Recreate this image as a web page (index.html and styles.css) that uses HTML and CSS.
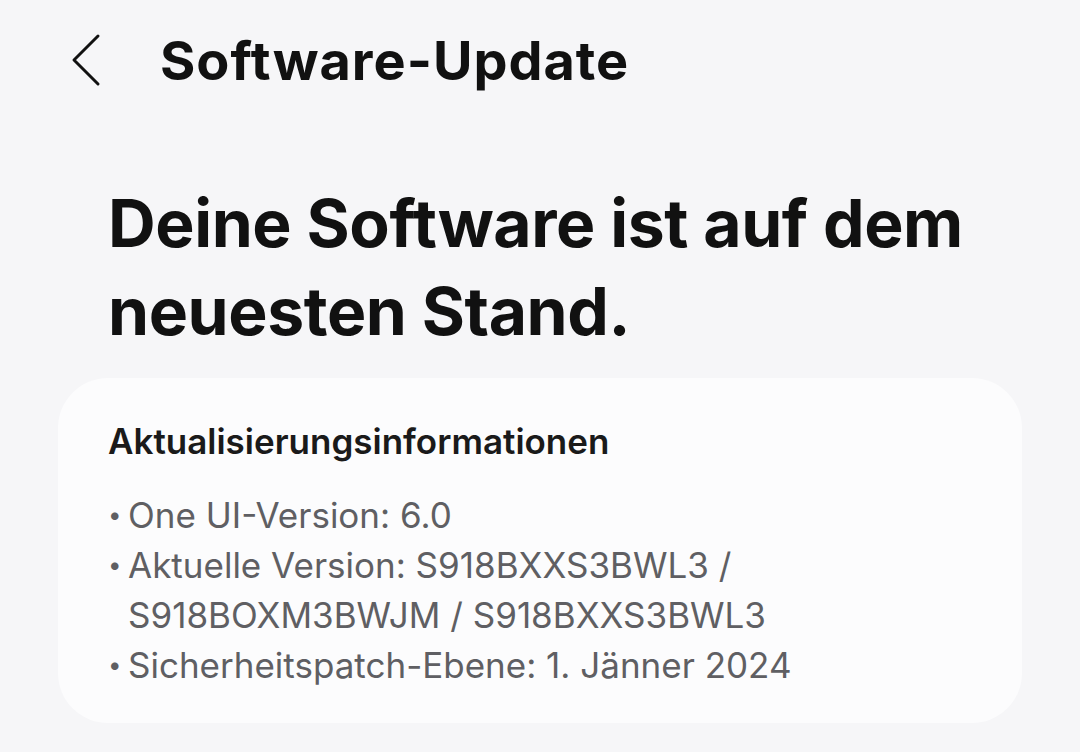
FILE: index.html
```html
<!DOCTYPE html>
<html lang="de">
<head>
  <meta charset="UTF-8">
  <title>Software-Update</title>
  <meta name="viewport" content="width=device-width, initial-scale=1.0">
  <link rel="stylesheet" href="styles.css">
</head>
<body>
<div class="screen">
  <header class="topbar">
    <button class="back" aria-label="Zurück">
      <svg width="32" height="54" viewBox="0 0 32 54">
        <path d="M28 3 L4 27 L28 51" fill="none" stroke="#111" stroke-width="3" stroke-linecap="round" stroke-linejoin="round"/>
      </svg>
    </button>
    <h1>Software-Update</h1>
  </header>

  <h2 class="status">Deine Software ist auf dem neuesten Stand.</h2>

  <section class="card">
    <h3>Aktualisierungsinformationen</h3>
    <ul class="info">
      <li>One UI-Version: 6.0</li>
      <li>Aktuelle Version: S918BXXS3BWL3 / S918BOXM3BWJM / S918BXXS3BWL3</li>
      <li>Sicherheitspatch-Ebene: 1. Jänner 2024</li>
    </ul>
  </section>
</div>
</body>
</html>
```

FILE: styles.css
```css
body {
  margin: 0;
  background: #f6f6f8;
  font-family: Inter, Roboto, "Noto Sans", sans-serif;
  color: #111;
}
.screen {
  width: 1080px;
  height: 752px;
  overflow: hidden;
}
.topbar {
  display: flex;
  align-items: center;
  height: 120px;
  padding: 0 0 0 70px;
}
.back {
  background: none;
  border: none;
  padding: 0;
  width: 90px;
  height: 60px;
  display: flex;
  align-items: center;
  cursor: pointer;
}
.topbar h1 {
  margin: 0;
  font-size: 54px;
  font-weight: 700;
  letter-spacing: 1px;
}
.status {
  margin: 59px 0 0 108px;
  width: 900px;
  font-size: 66px;
  line-height: 88px;
  font-weight: 700;
  letter-spacing: -0.4px;
}

/* Info card */
.card {
  box-sizing: border-box;
  margin: 23px 58px 0;
  background: #fcfcfd;
  border-radius: 50px;
  padding: 42px 50px 30px;
  height: 345px;
}
.card h3 {
  margin: 0;
  font-size: 35px;
  font-weight: 600;
  color: #1a1a1a;
}
.info {
  list-style: none;
  margin: 28px 0 0;
  padding: 0 0 0 20px;
  font-size: 35px;
  line-height: 50px;
  color: #5f5f63;
}
.info li {
  position: relative;
  width: 700px;
}
.info li::before {
  content: "•";
  position: absolute;
  left: -20px;
  font-size: 24px;
}
```
